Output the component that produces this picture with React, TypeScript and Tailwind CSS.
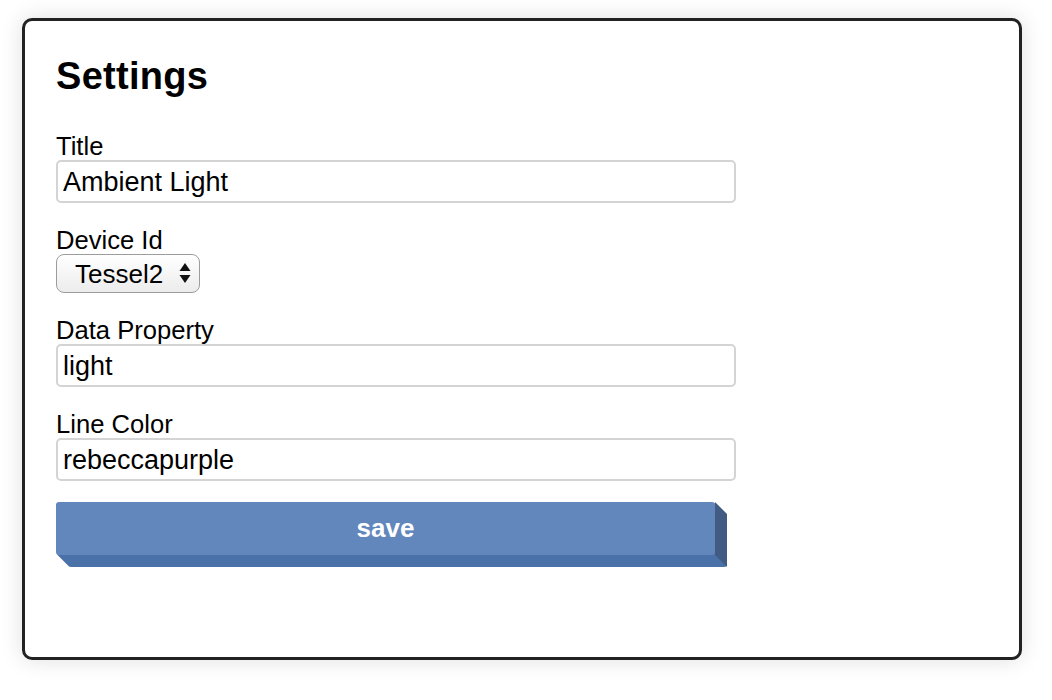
import React from "react";

const FONT = { fontFamily: '"Liberation Sans", Arial, Helvetica, sans-serif' };

function Field({ label, children }: { label: string; children: React.ReactNode }) {
  return (
    <div className="flex flex-col items-start">
      <label className="block text-[25.6px] leading-[28px] text-black">{label}</label>
      {children}
    </div>
  );
}

function TextInput({ value }: { value: string }) {
  return (
    <input
      type="text"
      defaultValue={value}
      className="block h-[43px] w-[680px] rounded-[5px] border-2 border-[#d4d4d4] bg-white px-[5px] pt-[2px] text-[27px] text-black outline-none"
      style={FONT}
    />
  );
}

function SelectArrows() {
  return (
    <svg
      width="12"
      height="22"
      viewBox="0 0 12 22"
      className="pointer-events-none absolute right-[9px] top-[8px]"
    >
      <path d="M6 1 L11.5 9 L0.5 9 Z" fill="#111" />
      <path d="M6 21 L11.5 13 L0.5 13 Z" fill="#111" />
    </svg>
  );
}

export default function App() {
  return (
    <div className="min-h-[700px] bg-white pl-[22px] pt-[18px]" style={FONT}>
      <div className="h-[642px] w-[1000px] rounded-[10px] border-[3px] border-[#222222] bg-white px-[31px] pt-[35px] shadow-[0_0_22px_rgba(0,0,0,0.13)]">
        <h1 className="text-[38px] font-bold leading-[40px] tracking-[0.3px] text-black">
          Settings
        </h1>

        <form className="mt-[36px] flex flex-col gap-[23px]" onSubmit={(e) => e.preventDefault()}>
          <Field label="Title">
            <TextInput value="Ambient Light" />
          </Field>

          <Field label="Device Id">
            <div className="relative">
              <select
                defaultValue="Tessel2"
                className="block h-[39px] w-[144px] appearance-none rounded-[8px] border border-[#9c9c9c] bg-gradient-to-b from-white to-[#ececec] pl-[18px] pr-[30px] text-[26px] text-black outline-none"
                style={FONT}
              >
                <option>Tessel2</option>
              </select>
              <SelectArrows />
            </div>
          </Field>

          <Field label="Data Property">
            <TextInput value="light" />
          </Field>

          <Field label="Line Color">
            <TextInput value="rebeccapurple" />
          </Field>

          <button
            type="submit"
            className="relative -mt-[2px] block h-[53px] w-[659px] rounded-[3px] bg-[#6287bc] text-[26px] font-bold text-white shadow-[1px_1px_0_#4a72a9,2px_2px_0_#4a72a9,3px_3px_0_#4a72a9,4px_4px_0_#4a72a9,5px_5px_0_#4a72a9,6px_6px_0_#4a72a9,7px_7px_0_#4a72a9,8px_8px_0_#4a72a9,9px_9px_0_#4a72a9,10px_10px_0_#4a72a9,11px_11px_0_#4a72a9,12px_12px_0_#4a72a9]"
            style={FONT}
          >
            save
            <span className="absolute left-full top-0 h-[65px] w-[12px] bg-[#425b82] [clip-path:polygon(0_0,100%_12px,100%_100%,0_calc(100%-12px))]" />
          </button>
        </form>
      </div>
    </div>
  );
}
